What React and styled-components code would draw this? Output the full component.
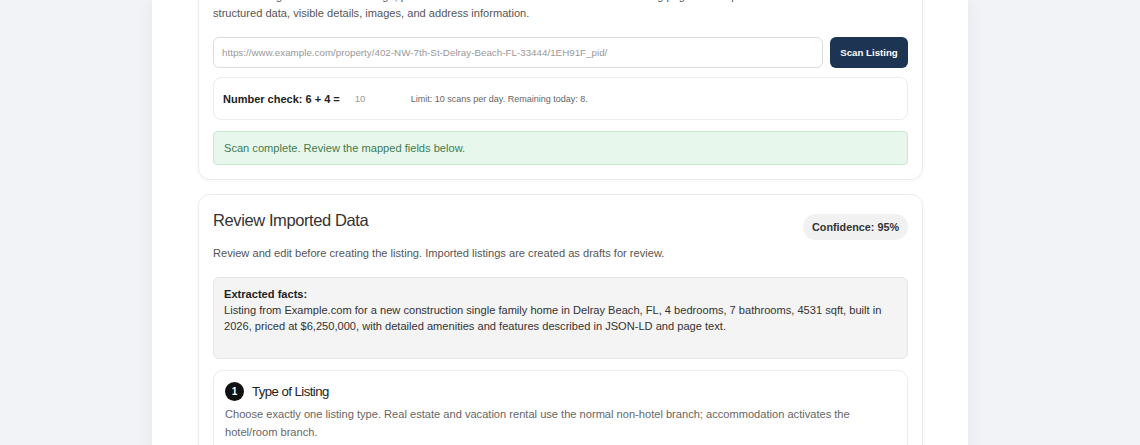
import React from "react";
import styled, { createGlobalStyle } from "styled-components";

const GlobalStyle = createGlobalStyle`
  html, body { margin: 0; padding: 0; background: #f2f3f7; }
  body { font-family: "Liberation Sans", Arial, sans-serif; color: #333; overflow: hidden; }
  * { box-sizing: border-box; }
`;

const Page = styled.div`
  display: flex;
  padding-left: 152px;
  min-height: 445px;
`;

const Panel = styled.main`
  width: 816px;
  min-height: 445px;
  background: #fff;
  box-shadow: 0 0 18px rgba(20, 30, 60, 0.06);
  padding: 0 45px 0 46px;
`;

const Stack = styled.div`
  display: flex;
  flex-direction: column;
  gap: 14px;
  margin-top: -28px;
`;

const Card = styled.section`
  background: #fff;
  border: 1px solid #ececec;
  border-radius: 12px;
  box-shadow: 0 1px 4px rgba(0, 0, 0, 0.04);
  padding: ${(p) => (p.$tight ? "14px" : "15px")} 14px 14px;
`;

const Lead = styled.p`
  margin: 0 0 15px;
  font-size: 11.1px;
  line-height: 17px;
  color: #555;
`;

const UrlRow = styled.div`
  display: flex;
  gap: 7px;
`;

const UrlInput = styled.input`
  flex: 1;
  height: 31px;
  border: 1px solid #dcdcdc;
  border-radius: 6px;
  padding: 0 8px;
  font-family: inherit;
  font-size: 9.8px;
  color: #999;
  outline: none;
`;

const DarkButton = styled.button`
  width: 78px;
  height: 31px;
  border: none;
  border-radius: 6px;
  background: #1e3453;
  color: #fff;
  font-family: inherit;
  font-weight: bold;
  font-size: 9.7px;
`;

const CheckBox = styled.div`
  margin-top: 9px;
  height: 43px;
  border: 1px solid #ececec;
  border-radius: 8px;
  display: flex;
  align-items: center;
  padding: 0 9px;
`;

const CheckLabel = styled.span`
  font-weight: bold;
  font-size: 11px;
  color: #222;
`;

const CheckValue = styled.span`
  margin-left: 15px;
  width: 56px;
  font-size: 9.6px;
  color: #999;
`;

const CheckHint = styled.span`
  font-size: 9px;
  color: #666;
`;

const Success = styled.div`
  margin-top: 11px;
  height: 34px;
  display: flex;
  align-items: center;
  padding: 0 10px;
  background: #e8f7ec;
  border: 1px solid #c8e9d0;
  border-radius: 4px;
  font-size: 11.1px;
  color: #3f7b4f;
`;

const HeaderRow = styled.div`
  display: flex;
  justify-content: space-between;
  align-items: flex-start;
`;

const Title = styled.h2`
  margin: 0;
  font-weight: normal;
  font-size: 16.5px;
  line-height: 22px;
  letter-spacing: -0.4px;
  color: #333;
`;

const Pill = styled.span`
  margin-top: 5px;
  height: 26px;
  padding: 0 9px;
  border-radius: 13px;
  background: #f1f1f1;
  display: flex;
  align-items: center;
  font-weight: bold;
  font-size: 10.8px;
  color: #333;
`;

const Sub = styled.p`
  margin: 5px 0 16px;
  font-size: 11.1px;
  line-height: 16px;
  color: #555;
`;

const Facts = styled.div`
  background: #f4f4f4;
  border: 1px solid #e6e6e6;
  border-radius: 6px;
  padding: 8px 10px 24px;
  font-size: 11.1px;
  line-height: 16px;
  color: #333;
`;

const FactsLabel = styled.div`
  font-weight: bold;
  color: #222;
`;

const Step = styled.div`
  margin-top: 11px;
  border: 1px solid #ececec;
  border-radius: 10px;
  padding: 11px 11px 14px;
`;

const StepHead = styled.div`
  display: flex;
  align-items: center;
  gap: 8px;
`;

const StepNum = styled.span`
  width: 19px;
  height: 19px;
  border-radius: 50%;
  background: #111;
  color: #fff;
  font-size: 10px;
  font-weight: bold;
  display: flex;
  align-items: center;
  justify-content: center;
`;

const StepTitle = styled.h3`
  margin: 0;
  font-weight: normal;
  font-size: 13.2px;
  letter-spacing: -0.55px;
  color: #222;
`;

const StepText = styled.p`
  margin: 4px 0 0;
  font-size: 11.1px;
  line-height: 18px;
  color: #666;
`;

export default function App() {
  return (
    <>
      <GlobalStyle />
      <Page>
        <Panel>
          <Stack>
            <Card>
              <Lead>
                Paste a listing URL from a brokerage, portal or vacation rental website. We'll scan the listing page and map the details found in its
                <br />
                structured data, visible details, images, and address information.
              </Lead>
              <UrlRow>
                <UrlInput
                  readOnly
                  value="https://www.example.com/property/402-NW-7th-St-Delray-Beach-FL-33444/1EH91F_pid/"
                />
                <DarkButton>Scan Listing</DarkButton>
              </UrlRow>
              <CheckBox>
                <CheckLabel>Number check: 6 + 4 =</CheckLabel>
                <CheckValue>10</CheckValue>
                <CheckHint>Limit: 10 scans per day. Remaining today: 8.</CheckHint>
              </CheckBox>
              <Success>Scan complete. Review the mapped fields below.</Success>
            </Card>
            <Card $tight>
              <HeaderRow>
                <Title>Review Imported Data</Title>
                <Pill>Confidence: 95%</Pill>
              </HeaderRow>
              <Sub>Review and edit before creating the listing. Imported listings are created as drafts for review.</Sub>
              <Facts>
                <FactsLabel>Extracted facts:</FactsLabel>
                Listing from Example.com for a new construction single family home in Delray Beach, FL, 4 bedrooms, 7 bathrooms, 4531 sqft, built in
                <br />
                2026, priced at $6,250,000, with detailed amenities and features described in JSON-LD and page text.
              </Facts>
              <Step>
                <StepHead>
                  <StepNum>1</StepNum>
                  <StepTitle>Type of Listing</StepTitle>
                </StepHead>
                <StepText>
                  Choose exactly one listing type. Real estate and vacation rental use the normal non-hotel branch; accommodation activates the
                  <br />
                  hotel/room branch.
                </StepText>
              </Step>
            </Card>
          </Stack>
        </Panel>
      </Page>
    </>
  );
}
